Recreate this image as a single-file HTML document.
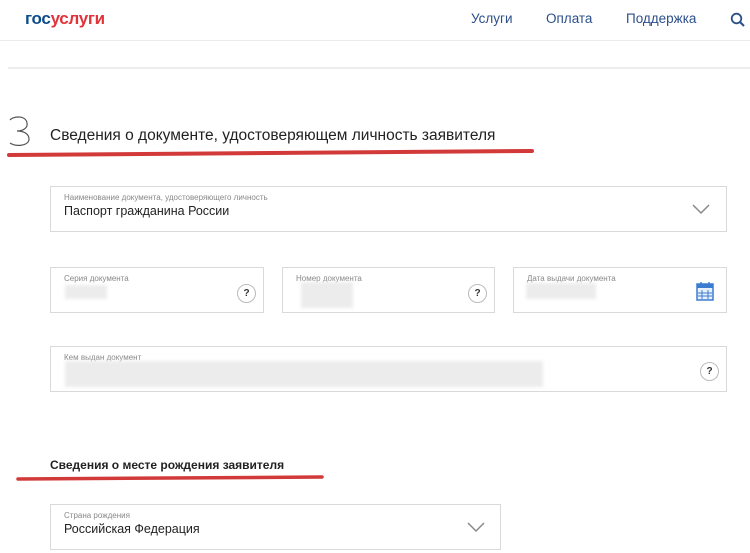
<!DOCTYPE html>
<html><head><meta charset="utf-8"><style>
*{margin:0;padding:0;box-sizing:border-box}
body{width:750px;height:553px;overflow:hidden;background:#fff;font-family:"Liberation Sans",sans-serif;position:relative;color:#222}
.a{position:absolute}
.box{position:absolute;border:1px solid #d9d9d9;background:#fff}
.lbl{position:absolute;left:13px;top:6px;font-size:8px;color:#888}
.val{position:absolute;left:13px;top:17px;font-size:13px;color:#222}
.blur{position:absolute;background:#ececec;filter:blur(1.5px)}
.q{position:absolute;width:19px;height:19px;border:1px solid #bbb;border-radius:50%;font-size:10px;font-weight:bold;text-align:center;line-height:17px;color:#333}
nav span{position:absolute;top:11px;font-size:13.5px;color:#2c4f8a}
</style></head><body>
<div class="a" style="left:25px;top:9px;font-size:17px;font-weight:bold;letter-spacing:-0.3px"><span style="color:#0d4c8b">гос</span><span style="color:#e0333a">услуги</span></div>
<nav><span style="left:471px">Услуги</span><span style="left:546px">Оплата</span><span style="left:626px">Поддержка</span></nav>
<svg class="a" style="left:730px;top:12px" width="16" height="16"><circle cx="6.5" cy="6.5" r="4.8" fill="none" stroke="#2c4f8a" stroke-width="1.8"/><line x1="10" y1="10" x2="14" y2="14" stroke="#2c4f8a" stroke-width="2"/></svg>
<div class="a" style="left:0;top:40px;width:750px;height:1px;background:#ececec"></div>
<div class="a" style="left:8px;top:67px;width:742px;height:2px;background:#ececec"></div>
<svg class="a" style="left:6px;top:114px" width="26" height="34"><path d="M4 6 C7 2 20 1 21 9 C22 14 17 17 11 17 C18 17 23 20 23 25 C23 32 10 33 4 29" fill="none" stroke="#555" stroke-width="1.2"/></svg>
<div class="a" style="left:50px;top:127px;font-size:15.5px;color:#222">Сведения о документе, удостоверяющем личность заявителя</div>
<svg class="a" style="left:0;top:145px" width="540" height="14"><path d="M9 10 L532 6" stroke="#d23a3a" stroke-width="4" stroke-linecap="round"/></svg>
<div class="box" style="left:50px;top:186px;width:677px;height:46px"><div class="lbl">Наименование документа, удостоверяющего личность</div><div class="val" style="font-size:12.5px">Паспорт гражданина России</div>
<svg class="a" style="left:641px;top:17px" width="18" height="11"><path d="M1 1 L9 9 L17 1" fill="none" stroke="#888" stroke-width="1.5"/></svg></div>
<div class="box" style="left:50px;top:267px;width:214px;height:46px"><div class="lbl">Серия документа</div><div class="blur" style="left:14px;top:17px;width:42px;height:14px"></div><div class="q" style="left:186px;top:16px">?</div></div>
<div class="box" style="left:282px;top:267px;width:213px;height:46px"><div class="lbl">Номер документа</div><div class="blur" style="left:18px;top:14px;width:52px;height:26px"></div><div class="q" style="left:185px;top:16px">?</div></div>
<div class="box" style="left:513px;top:267px;width:214px;height:46px"><div class="lbl">Дата выдачи документа</div><div class="blur" style="left:12px;top:15px;width:70px;height:16px"></div>
<svg class="a" style="left:182px;top:13px" width="18" height="20"><rect x="1" y="3" width="16" height="16" fill="#e8f0fb" stroke="#3b7bd0" stroke-width="1.5"/><rect x="1" y="3" width="16" height="4" fill="#3b7bd0"/><path d="M6 9v9M12 9v9M2 12h14M2 15h14" stroke="#3b7bd0" stroke-width="1"/><path d="M5 1v4M13 1v4" stroke="#3b7bd0" stroke-width="1.5"/></svg></div>
<div class="box" style="left:50px;top:346px;width:677px;height:46px"><div class="lbl">Кем выдан документ</div><div class="blur" style="left:14px;top:14px;width:478px;height:26px"></div><div class="q" style="left:649px;top:15px">?</div></div>
<div class="a" style="left:50px;top:458px;font-size:12px;font-weight:bold;color:#222">Сведения о месте рождения заявителя</div>
<svg class="a" style="left:0;top:472px" width="330" height="12"><path d="M18 7 L322 5" stroke="#d23a3a" stroke-width="3.5" stroke-linecap="round"/></svg>
<div class="box" style="left:50px;top:504px;width:451px;height:46px"><div class="lbl">Страна рождения</div><div class="val" style="font-size:12.5px">Российская Федерация</div>
<svg class="a" style="left:416px;top:17px" width="18" height="11"><path d="M1 1 L9 9 L17 1" fill="none" stroke="#888" stroke-width="1.5"/></svg></div>
</body></html>
